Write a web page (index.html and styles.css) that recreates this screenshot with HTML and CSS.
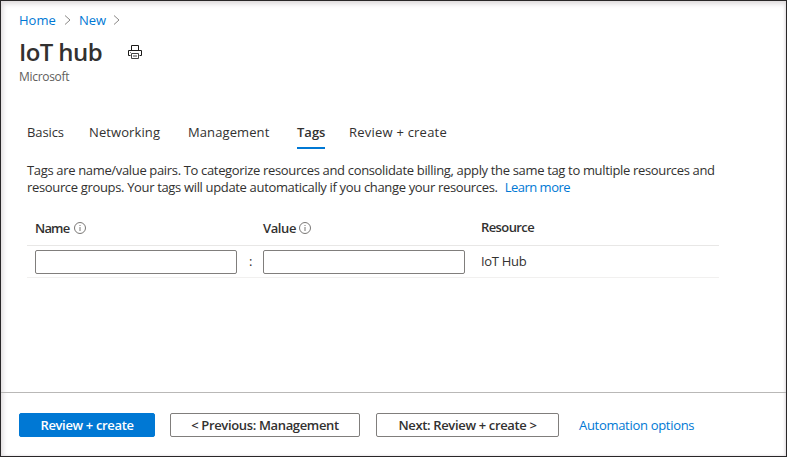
FILE: index.html
```html
<!DOCTYPE html>
<html lang="en">
<head>
<meta charset="utf-8">
<title>IoT hub</title>
<link rel="stylesheet" href="styles.css">
</head>
<body>
<div class="window">
  <nav class="crumbs">
    <a class="home">Home</a>
    <svg class="chevron" width="8" height="12" viewBox="0 0 8 12"><path d="M1 1.500L6 6l-5 4.500"/></svg>
    <a class="new">New</a>
    <svg class="chevron" width="8" height="12" viewBox="0 0 8 12"><path d="M0 1.500L5 6l-5 4.500"/></svg>
  </nav>
  <header class="title">
    <h1>IoT hub</h1>
    <svg class="printer" width="14" height="14" viewBox="0 0 14 14"><path class="dark" d="M3.500 5V.5h7V5M2.500 10.500H.5v-5h13v5h-2"/><path class="mid" d="M3.500 8.500h7v5h-7zM5 11h4"/><path class="dot" d="M2 7.500h1"/></svg>
  </header>
  <div class="publisher">Microsoft</div>
  <nav class="tabs">
    <span class="tab basics">Basics</span>
    <span class="tab networking">Networking</span>
    <span class="tab management">Management</span>
    <span class="tab active">Tags</span>
    <span class="tab review">Review + create</span>
  </nav>
  <p class="intro"><span class="line-one">Tags are name/value pairs. To categorize resources and consolidate billing, apply the same tag to multiple resources and</span><br><span class="line-two">resource groups. Your tags will update automatically if you change your resources.</span><a class="learn">Learn more</a></p>
  <section class="grid">
    <div class="row head">
      <div class="label"><span class="name">Name</span><svg class="info" width="12" height="12" viewBox="0 0 12 12"><circle cx="6" cy="6" r="5.500"/><path d="M6 5v4M6 3v1"/></svg></div>
      <div></div>
      <div class="label"><span class="value">Value</span><svg class="info" width="12" height="12" viewBox="0 0 12 12"><circle cx="6" cy="6" r="5.500"/><path d="M6 5v4M6 3v1"/></svg></div>
      <div class="resource">Resource</div>
    </div>
    <div class="row entry">
      <input type="text" aria-label="Name">
      <div class="colon">:</div>
      <input type="text" aria-label="Value">
      <div class="hub">IoT Hub</div>
    </div>
  </section>
  <footer class="footer">
    <button class="primary"><span>Review + create</span></button>
    <button class="previous"><span>&lt; Previous: Management</span></button>
    <button class="next"><span>Next: Review + create &gt;</span></button>
    <a class="automation">Automation options</a>
  </footer>
</div>
</body>
</html>
```

FILE: styles.css
```css
* { box-sizing: border-box; }
body {
  margin: 0;
  background: #fff;
  color: #323130;
  font: 13px/17px "Open Sans", "Noto Sans", sans-serif;
}
a { color: #0078d4; }
a, span { white-space: nowrap; }
.window {
  width: 787px;
  height: 457px;
  border: 1px solid #292728;
  box-shadow: inset 2px 3px 5px #dfdbdd, inset -1px 0 3px #dfdbdd;
  display: flex;
  flex-direction: column;
  overflow: hidden;
}
.crumbs {
  display: flex;
  align-items: center;
  height: 18px;
  margin: 10px 0 0 18px;
}
.home { width: 45px; }
.new { width: 35px; margin-left: 7px; }
.chevron { fill: none; stroke: #8a8886; }
.title {
  display: flex;
  align-items: center;
  height: 32px;
  margin: 7px 0 0 18px;
}
h1 {
  width: 109px;
  margin: 0;
  font-size: 24px;
  line-height: 32px;
  font-weight: 600;
  letter-spacing: -.6px;
  white-space: nowrap;
}
.printer { fill: none; }
.dark { stroke: #1b1a19; }
.mid { stroke: #444; }
.dot { stroke: #777; }
.publisher {
  height: 16px;
  margin: 1px 0 0 18px;
  font-size: 12px;
  line-height: 16px;
  letter-spacing: -.3px;
  color: #605e5c;
}
.tabs {
  display: flex;
  height: 28px;
  margin: 36px 0 0 26px;
  line-height: 22px;
}
.tab { height: 28px; }
.basics { width: 62px; letter-spacing: -.1px; }
.networking { width: 99px; letter-spacing: .1px; }
.management { width: 109px; letter-spacing: .1px; }
.review { letter-spacing: .22px; }
.active {
  width: 28px;
  margin-right: 24px;
  border-bottom: 2px solid #0078d4;
  font-weight: 600;
}
.intro { margin: 13px 0 0 26px; letter-spacing: -.34px; }
.learn { margin-left: 7px; letter-spacing: -.5px; }
.grid { width: 692px; margin: 15px 0 0 26px; }
.row {
  display: grid;
  grid-template-columns: 202px 26px 202px 1fr;
  align-items: center;
  padding-left: 8px;
  border-bottom: 1px solid #e8e7e6;
}
.head { height: 35px; font-weight: 600; }
.entry { height: 32px; border-color: #f1f0ef; }
.label { display: flex; align-items: center; height: 100%; }
.name { width: 39px; letter-spacing: -.8px; }
.value { width: 36px; letter-spacing: -.4px; }
.info { fill: none; stroke: #797775; }
input {
  width: 202px;
  height: 24px;
  border: 1px solid #807e7c;
  border-radius: 2px;
}
.colon { padding-left: 12px; }
.resource, .hub { padding-left: 16px; letter-spacing: -.3px; }
.resource { padding-bottom: 2px; letter-spacing: -.6px; }
.footer {
  display: flex;
  height: 64px;
  margin-top: auto;
  padding: 20px 0 0 18px;
  border-top: 1px solid #b9b8b7;
}
button {
  height: 24px;
  padding: 0;
  border: 1px solid #807e7c;
  border-radius: 2px;
  background: #fff;
  color: #323130;
  font: 600 13px/20px "Open Sans", "Noto Sans", sans-serif;
  letter-spacing: -.35px;
}
.primary {
  width: 136px;
  border-color: #0078d4;
  background: #0078d4;
  color: #fff;
}
.previous { width: 190px; margin-left: 15px; }
.next { width: 183px; margin-left: 16px; }
.automation { margin-left: 20px; line-height: 24px; letter-spacing: -.3px; }
```
